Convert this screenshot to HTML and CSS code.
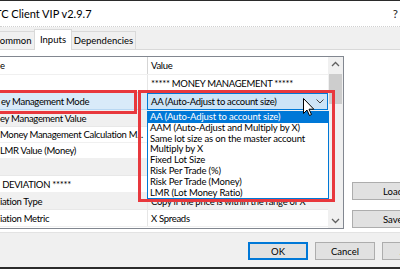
FILE: index.html
```html
<!DOCTYPE html>
<html>
<head>
<meta charset="utf-8">
<link rel="stylesheet" href="styles.css">
</head>
<body>
<div class="window">
  <div class="titlebar">
    <span class="title">TC Client VIP v2.9.7</span>
    <span class="help">?</span>
  </div>
  <div class="tabstrip">
    <div class="tab tab-common">Common</div>
    <div class="tab tab-inputs active">Inputs</div>
    <div class="tab tab-deps">Dependencies</div>
  </div>
  <div class="tabpage">
    <div class="grid">
      <div class="grid-body">
        <div class="row header h18"><div class="c-name">e</div><div class="c-val">Value</div></div>
        <div class="row h17"><div class="c-name"></div><div class="c-val">***** MONEY MANAGEMENT *****</div></div>
        <div class="row h19 sel"><div class="c-name">ey Management Mode</div><div class="c-val combo-cell">
          <div class="combo"><span>AA (Auto-Adjust to account size)</span>
            <svg class="chev" width="8" height="5" viewBox="0 0 8 5"><path d="M0.5 0.5 L4 4 L7.5 0.5" fill="none" stroke="#444" stroke-width="1"/></svg>
          </div></div></div>
        <div class="row h16 gray"><div class="c-name">ey Management Value</div><div class="c-val"></div></div>
        <div class="row h16"><div class="c-name">Money Management Calculation M...</div><div class="c-val"></div></div>
        <div class="row h16"><div class="c-name">LMR Value (Money)</div><div class="c-val"></div></div>
        <div class="row h17 gray"><div class="c-name"></div><div class="c-val"></div></div>
        <div class="row h17"><div class="c-name">&nbsp;DEVIATION *****</div><div class="c-val"></div></div>
        <div class="row h17 gray"><div class="c-name">iation Type</div><div class="c-val">Copy if the price is within the range of X</div></div>
        <div class="row h17"><div class="c-name">iation Metric</div><div class="c-val">X Spreads</div></div>
      </div>
      <div class="scrollbar">
        <svg class="arrow" width="15" height="15" viewBox="0 0 15 15"><path d="M4 9 L7.5 5.5 L11 9" fill="none" stroke="#606060" stroke-width="1.3"/></svg>
        <div class="thumb"></div>
        <div class="track"></div>
        <svg class="arrow" width="15" height="15" viewBox="0 0 15 15"><path d="M4 6 L7.5 9.5 L11 6" fill="none" stroke="#606060" stroke-width="1.3"/></svg>
      </div>
    </div>
    <div class="side">
      <div class="btn side-btn">Load</div>
      <div class="btn side-btn">Save</div>
    </div>
  </div>
  <div class="footer">
    <div class="btn foot-btn default">OK</div>
    <div class="btn foot-btn">Cancel</div>
    <div class="btn foot-btn">Apply</div>
  </div>
</div>

<div class="dropdown">
  <div class="item hi">AA (Auto-Adjust to account size)</div>
  <div class="item">AAM (Auto-Adjust and Multiply by X)</div>
  <div class="item">Same lot size as on the master account</div>
  <div class="item">Multiply by X</div>
  <div class="item">Fixed Lot Size</div>
  <div class="item">Risk Per Trade (%)</div>
  <div class="item">Risk Per Trade (Money)</div>
  <div class="item">LMR (Lot Money Ratio)</div>
</div>
<div class="mark mark-name"></div>
<div class="mark mark-value"></div>
<svg class="cursor" width="12" height="19" viewBox="0 0 12 19">
  <path d="M0.5 0.5 L0.5 15.5 L4 12 L6.5 17.5 L8.5 16.5 L6 11.2 L10.8 11.2 Z" fill="#fff" stroke="#000" stroke-width="1" stroke-linejoin="miter"/>
</svg>
</body>
</html>
```
FILE: styles.css
```css
* { box-sizing: border-box; }
html, body { margin: 0; padding: 0; }
body {
  width: 400px; height: 269px; overflow: hidden; position: relative;
  background: #f0f0f0;
  font-family: "Segoe UI", Lato, "Liberation Sans", sans-serif;
  font-size: 9.5px; color: #000;
}
.window {
  height: 269px; display: flex; flex-direction: column;
  border-top: 1px solid #2b2b2b; border-bottom: 2px solid #2b2b2b;
}
.titlebar {
  height: 26px; flex: none; background: #fff;
  display: flex; align-items: center; justify-content: space-between;
  padding-right: 2px; font-size: 11px;
  border-bottom: 1px dotted #d0d0d0;
}
.title { margin-left: -5px; }
.help { font-size: 11.5px; color: #222; }
.tabstrip {
  height: 23px; flex: none; display: flex; align-items: flex-end;
  margin-left: -10px; border-bottom: 1px solid #d9d9d9;
  background: #f0f0f0;
}
.tab {
  height: 18px; border: 1px solid #d9d9d9; border-bottom: none;
  background: #f0f0f0; display: flex; align-items: center; justify-content: center;
  margin-right: -1px; flex: none; white-space: nowrap;
}
.tab-common { width: 45px; }
.tab-inputs { width: 38px; }
.tab-deps { width: 65px; }
.tab.active { height: 21px; background: #fff; margin-bottom: -1px; position: relative; z-index: 1; padding-bottom: 2px; }
.tabpage {
  height: 183px; flex: none; background: #fff; display: flex;
  padding-top: 6px; border-bottom: 1px solid #e3e3e3;
}
.grid {
  width: 354px; height: 173px; margin-left: -10px; flex: none;
  border: 1px solid #828790; display: flex; background: #fff;
  letter-spacing: -0.3px;
}
.grid-body { flex: 1; display: flex; flex-direction: column; min-width: 0; }
.row { display: flex; border-bottom: 1px solid #f0f0f0; }
.h16 { height: 16px; } .h17 { height: 17px; } .h18 { height: 18px; } .h19 { height: 19px; }
.row.gray { background: #f0f0f0; border-bottom-color: #e8e8e8; }
.c-name {
  width: 157px; flex: none; padding-left: 9px; display: flex; align-items: center;
  white-space: nowrap; overflow: hidden; border-right: 1px solid #e6e6e6;
}
.c-val { flex: 1; min-width: 0; padding-left: 3px; display: flex; align-items: center; white-space: nowrap; overflow: hidden; }
.header .c-name { border-right-color: #d5d5d5; }
.row.sel .c-name { background: #d9eaf9; border: 1px solid #b9d7f2; }
.combo-cell { padding: 1px 0 0 0; margin-left: -1px; align-items: stretch; }
.combo {
  flex: 1; background: #cce4f7; border: 1px solid #0078d7;
  display: flex; align-items: center; justify-content: space-between;
  padding: 0 3px 0 3px;
}
.scrollbar { width: 15px; flex: none; display: flex; flex-direction: column; background: #f0f0f0; }
.arrow { flex: none; display: block; }
.thumb { height: 30px; background: #cdcdcd; margin: 2px 1px 0 1px; }
.track { flex: 1; }
.side { display: flex; flex-direction: column; gap: 10px; padding-top: 126px; margin-left: 8px; }
.btn {
  background: #e1e1e1; border: 1px solid #adadad;
  display: flex; align-items: center; justify-content: center;
}
.side-btn { width: 60px; height: 18px; justify-content: flex-start; padding-left: 30px; }
.footer { flex: 1; display: flex; gap: 7px; padding: 9px 0 0 248px; }
.foot-btn { width: 60px; height: 18px; flex: none; }
.foot-btn.default { border: 2px solid #0078d7; }
.dropdown {
  position: absolute; left: 147px; top: 111px; width: 182px; height: 88px;
  background: #fff; border: 1px solid #0078d7; letter-spacing: -0.15px;
}
.item { height: 10.8px; line-height: 10.8px; padding-left: 2px; white-space: nowrap; }
.item.hi { background: #0078d7; color: #fff; }
.mark { position: absolute; border: 3px solid #e8383d; }
.mark-name { left: -10px; top: 90px; width: 147px; height: 24px; }
.mark-value { left: 138px; top: 90px; width: 197px; height: 112px; }
.cursor { position: absolute; left: 303px; top: 98px; }
```
